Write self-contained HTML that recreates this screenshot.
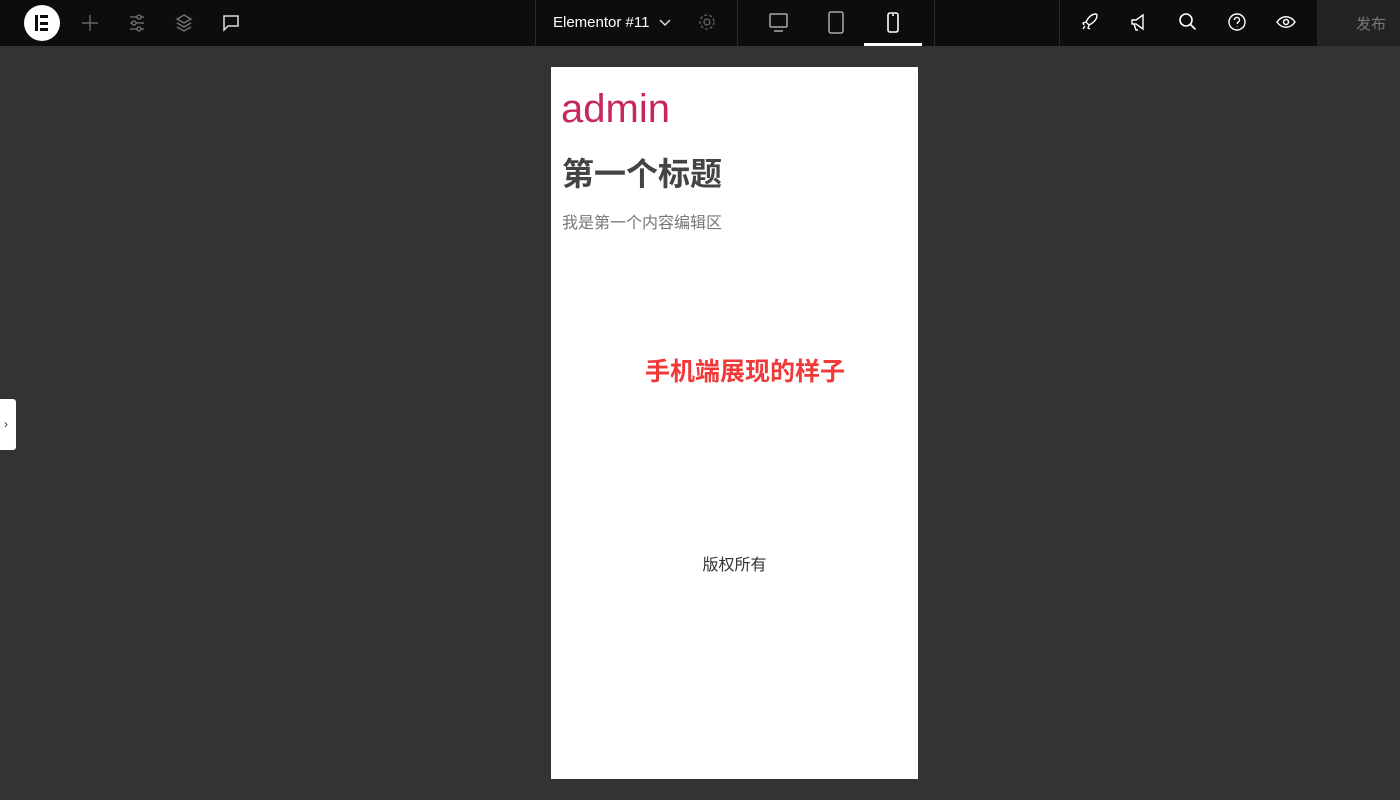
<!DOCTYPE html>
<html><head><meta charset="utf-8"><style>
*{margin:0;padding:0;box-sizing:border-box}
body{width:1400px;height:800px;background:#333;font-family:"Liberation Sans","Noto Sans CJK SC",sans-serif;position:relative;overflow:hidden}
.bar{position:absolute;left:0;top:0;width:1400px;height:46px;background:#0c0d0e}
.sep{position:absolute;top:0;width:1px;height:46px;background:#2a2b2d}
.ic{position:absolute;top:11px}
.page{position:absolute;left:551px;top:67px;width:367px;height:712px;background:#fff}
</style></head><body>
<div class="bar">
<div style="position:absolute;left:24px;top:5px;width:36px;height:36px;border-radius:50%;background:#fff"></div>
<div style="position:absolute;left:35px;top:15px;width:3px;height:16px;background:#0c0d0e"></div>
<div style="position:absolute;left:40px;top:15px;width:8px;height:3px;background:#0c0d0e"></div>
<div style="position:absolute;left:40px;top:21.5px;width:8px;height:3px;background:#0c0d0e"></div>
<div style="position:absolute;left:40px;top:28px;width:8px;height:3px;background:#0c0d0e"></div>
<svg class="ic" style="left:80px" width="20" height="24" fill="none" stroke="#666" stroke-width="1.4"><path d="M10 4v16M2 12h16"/></svg>
<svg class="ic" style="left:127px" width="20" height="24" fill="none" stroke="#777" stroke-width="1.3"><path d="M3 6h14M3 12h14M3 18h14"/><circle cx="12" cy="6" r="2" fill="#0c0d0e"/><circle cx="7" cy="12" r="2" fill="#0c0d0e"/><circle cx="12" cy="18" r="2" fill="#0c0d0e"/></svg>
<svg class="ic" style="left:174px" width="20" height="24" fill="none" stroke="#777" stroke-width="1.3"><path d="M10 4l7 4-7 4-7-4z"/><path d="M3 12l7 4 7-4M3 16l7 4 7-4"/></svg>
<svg class="ic" style="left:221px" width="20" height="24" fill="none" stroke="#ddd" stroke-width="1.5"><path d="M3 5h14v10H7l-4 4z"/></svg>
<div class="sep" style="left:535px"></div>
<div style="position:absolute;left:553px;top:14px;color:#fff;font-size:15px">Elementor #11</div>
<svg class="ic" style="left:656px" width="18" height="24" fill="none" stroke="#ddd" stroke-width="1.5"><path d="M4 9l5 5 5-5"/></svg>
<svg class="ic" style="left:697px" width="20" height="24" fill="none" stroke="#666" stroke-width="1.3"><circle cx="10" cy="11" r="3"/><circle cx="10" cy="11" r="7" stroke-dasharray="3 2"/></svg>
<div class="sep" style="left:737px"></div>
<svg class="ic" style="left:768px" width="22" height="24" fill="none" stroke="#aaa" stroke-width="1.5"><rect x="2" y="3" width="17" height="13" rx="1"/><path d="M6 20h9"/></svg>
<svg class="ic" style="left:826px" width="20" height="24" fill="none" stroke="#aaa" stroke-width="1.5"><rect x="3" y="1" width="14" height="21" rx="2"/></svg>
<svg class="ic" style="left:884px" width="18" height="24" fill="none" stroke="#fff" stroke-width="1.6"><rect x="4" y="2" width="10" height="19" rx="2"/><path d="M8 4h2"/></svg>
<div style="position:absolute;left:864px;top:43px;width:58px;height:3px;background:#fff"></div>
<div class="sep" style="left:934px"></div>
<div class="sep" style="left:1059px"></div>
<svg class="ic" style="left:1080px" width="20" height="24" fill="none" stroke="#fff" stroke-width="1.4"><path d="M16 3c-5 0-8 4-10 8l3 3c4-2 8-5 8-10zM6 11l-3 1 1 2M9 14l-1 3 2 1M5 15l-2 3"/></svg>
<svg class="ic" style="left:1129px" width="20" height="24" fill="none" stroke="#fff" stroke-width="1.4"><path d="M3 9h4l7-5v14l-7-5H3zM5 13l2 6h2"/></svg>
<svg class="ic" style="left:1178px" width="20" height="24" fill="none" stroke="#fff" stroke-width="1.6"><circle cx="8" cy="9" r="6"/><path d="M12.5 13.5l5 5"/></svg>
<svg class="ic" style="left:1227px" width="20" height="24" fill="none" stroke="#fff" stroke-width="1.4"><circle cx="10" cy="11" r="8"/><path d="M7.5 9a2.5 2.5 0 1 1 3 2.4v1.6M10 15.5v.5"/></svg>
<svg class="ic" style="left:1276px" width="20" height="24" fill="none" stroke="#fff" stroke-width="1.5"><path d="M1 11c5-7 13-7 18 0-5 7-13 7-18 0z"/><circle cx="10" cy="11" r="2.5"/></svg>
<div style="position:absolute;left:1317px;top:0;width:83px;height:46px;background:#232324"></div>
<div style="position:absolute;left:1356px;top:13px;color:#777;font-size:15px">发布</div>
</div>
<div style="position:absolute;left:0;top:399px;width:16px;height:51px;background:#fff;border-radius:0 3px 3px 0;font-size:12px;color:#333;line-height:51px;padding-left:4px">›</div>
<div class="page">
<div style="position:absolute;left:10px;top:20px;color:#c7285a;font-size:40px;line-height:45px">admin</div>
<div style="position:absolute;left:11px;top:87px;color:#444;font-size:32px;font-weight:bold;line-height:40px">第一个标题</div>
<div style="position:absolute;left:11px;top:146px;color:#777;font-size:16px;line-height:22px">我是第一个内容编辑区</div>
<div style="position:absolute;left:94px;top:290px;color:#f03a3a;font-size:25px;font-weight:bold;line-height:30px">手机端展现的样子</div>
<div style="position:absolute;left:0;width:367px;text-align:center;top:488px;color:#333;font-size:16px;line-height:22px">版权所有</div>
</div>
</body></html>
